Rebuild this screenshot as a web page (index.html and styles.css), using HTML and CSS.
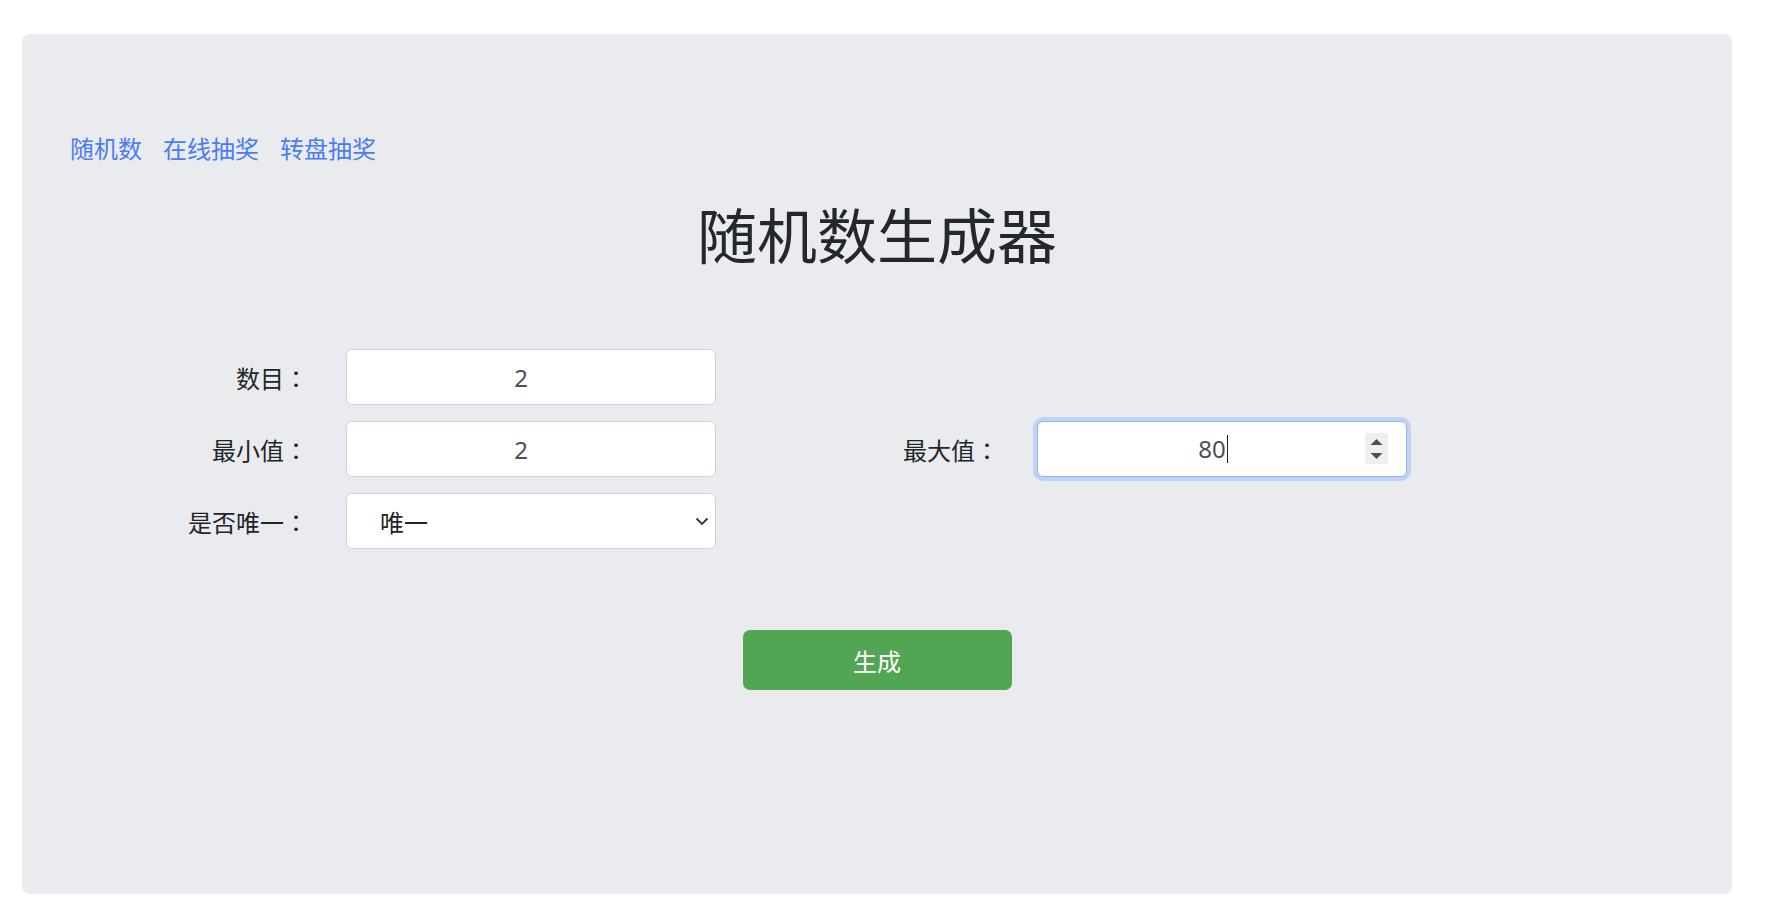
FILE: index.html
```html
<!DOCTYPE html>
<html lang="zh-CN">
<head>
<meta charset="utf-8">
<title>随机数生成器</title>
<link rel="stylesheet" href="styles.css">
</head>
<body>
<div class="jumbotron">
  <nav class="links">
    <a href="#">随机数</a>
    <a href="#">在线抽奖</a>
    <a href="#">转盘抽奖</a>
  </nav>
  <h1 class="title">随机数生成器</h1>
  <form class="form-grid">
    <label class="lbl row1 col1">数目<span class="colon">：</span></label>
    <input class="field row1 col2" type="text" value="2">

    <label class="lbl row2 col1">最小值<span class="colon">：</span></label>
    <input class="field row2 col2" type="text" value="2">
    <label class="lbl row2 col3">最大值<span class="colon">：</span></label>
    <div class="field focused row2 col4">
      <span class="val">80</span><span class="caret"></span>
      <span class="spinner">
        <svg width="23" height="31" viewBox="0 0 23 31">
          <path d="M5.5 12 L11.5 6 L17.5 12 Z" fill="#505050"/>
          <path d="M5.5 20 L11.5 26 L17.5 20 Z" fill="#505050"/>
        </svg>
      </span>
    </div>

    <label class="lbl row3 col1">是否唯一<span class="colon">：</span></label>
    <div class="select-wrap row3 col2">
      <select class="select">
        <option>唯一</option>
        <option>不唯一</option>
      </select>
      <svg class="chevron" width="14" height="9" viewBox="0 0 14 9">
        <path d="M1.5 1.5 L7 7 L12.5 1.5" fill="none" stroke="#333" stroke-width="1.8"/>
      </svg>
    </div>
  </form>
  <div class="actions">
    <button class="btn-generate" type="button">生成</button>
  </div>
</div>
</body>
</html>
```

FILE: styles.css
```css
* { box-sizing: border-box; }

html, body {
  margin: 0;
  padding: 0;
  background: #ffffff;
}

body {
  font-family: "Noto Sans", "Noto Sans CJK SC", sans-serif;
  color: #212529;
}

.jumbotron {
  margin: 34px 33px 0 22px;
  height: 860px;
  padding: 97px 48px 0 48px;
  background: #e9ebef;
  border-radius: 8px;
}

.links {
  display: flex;
  gap: 21px;
  font-size: 24px;
  line-height: 36px;
}

.links a {
  color: #4b7bf5;
  text-decoration: none;
}

.title {
  margin: 30px 0 0 0;
  text-align: center;
  font-family: "Noto Sans CJK SC", sans-serif;
  font-weight: 400;
  font-size: 60px;
  line-height: 72px;
  color: #25282b;
}

.form-grid {
  margin-top: 80px;
  display: grid;
  grid-template-columns: 238px 370px 245px 370px;
  grid-template-rows: 56px 56px 56px;
  column-gap: 38px;
  row-gap: 16px;
}

.row1 { grid-row: 1; }
.row2 { grid-row: 2; }
.row3 { grid-row: 3; }
.col1 { grid-column: 1; }
.col2 { grid-column: 2; }
.col3 { grid-column: 3; }
.col4 { grid-column: 4; }

.lbl {
  display: flex;
  align-items: center;
  justify-content: flex-end;
  font-family: "Noto Sans CJK SC", sans-serif;
  font-size: 24px;
  color: #212529;
}

.colon {
  font-family: "Noto Sans CJK JP", "Noto Sans CJK SC", sans-serif;
}

.field {
  width: 370px;
  height: 56px;
  margin: 0;
  padding: 0 38px 0 18px;
  border: 1px solid #ced4da;
  border-radius: 6px;
  background: #ffffff;
  font-family: "Noto Sans", "Noto Sans CJK SC", sans-serif;
  font-size: 24px;
  color: #495057;
  text-align: center;
  outline: none;
}

.field.focused {
  position: relative;
  display: flex;
  align-items: center;
  justify-content: center;
  padding-right: 36px;
  border-color: #8fb4f5;
  box-shadow: 0 0 0 4px #c1d3f5;
}

.val {
  line-height: 1;
}

.caret {
  display: inline-block;
  width: 1px;
  height: 28px;
  margin-left: 1px;
  background: #222;
}

.spinner {
  position: absolute;
  right: 18px;
  top: 11px;
  width: 23px;
  height: 31px;
  background: #efefef;
  display: block;
}

.spinner svg { display: block; }

.select-wrap {
  position: relative;
  width: 370px;
  height: 56px;
}

.select {
  width: 100%;
  height: 100%;
  margin: 0;
  padding: 0 40px 0 33px;
  border: 1px solid #ced4da;
  border-radius: 6px;
  background: #ffffff;
  font-family: "Noto Sans CJK SC", sans-serif;
  font-size: 24px;
  color: #212529;
  -webkit-appearance: none;
  appearance: none;
  outline: none;
}

.chevron {
  position: absolute;
  right: 7px;
  top: 24px;
  pointer-events: none;
}

.actions {
  display: flex;
  justify-content: center;
  margin-top: 81px;
}

.btn-generate {
  width: 269px;
  height: 60px;
  border: none;
  border-radius: 7px;
  background: #52a552;
  color: #ffffff;
  font-family: "Noto Sans CJK SC", sans-serif;
  font-size: 24px;
  cursor: pointer;
}
```
